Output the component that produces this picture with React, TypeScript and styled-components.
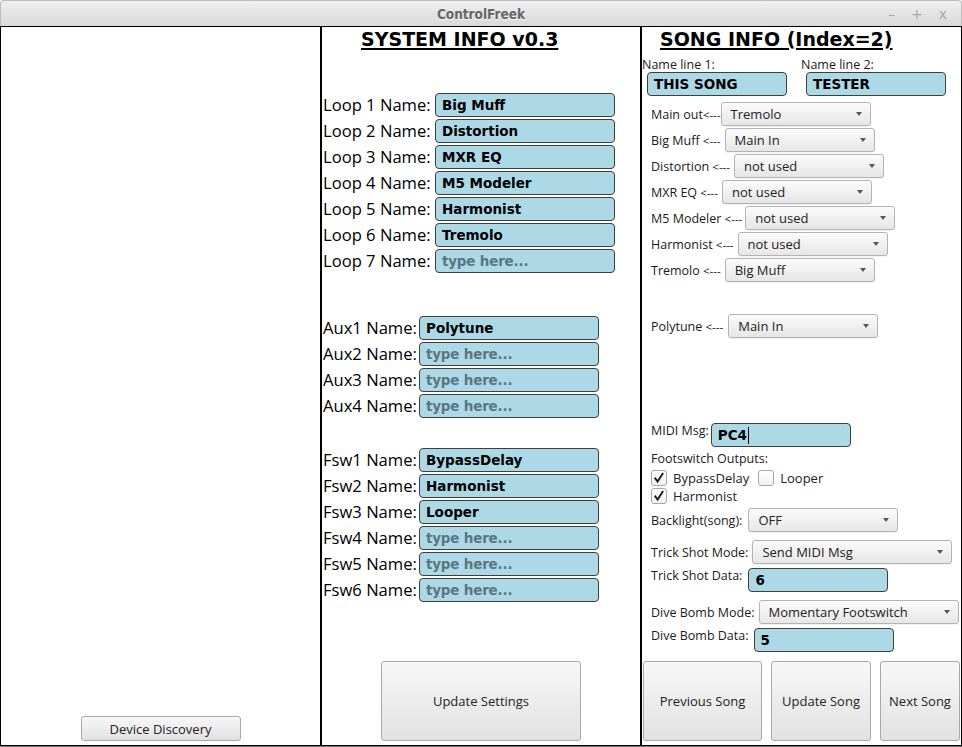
import React from 'react';
import styled, { createGlobalStyle } from 'styled-components';

const GlobalStyle = createGlobalStyle`
  html, body { margin: 0; padding: 0; background: #ffffff; }
  body { font-family: "Open Sans", "Noto Sans", sans-serif; overflow: hidden; }
  * { box-sizing: border-box; }
`;

const Window = styled.div`
  width: 962px;
  height: 747px;
  display: flex;
  flex-direction: column;
  background: #fff;
  border-bottom: 1px solid #777;
`;

const TitleBar = styled.div`
  height: 26px;
  flex: none;
  display: grid;
  grid-template-columns: 1fr auto 1fr;
  align-items: center;
  background: linear-gradient(#efefef, #d9d9d9);
  border: 1px solid #bdbdbd;
  border-bottom: none;
  border-radius: 4px 4px 0 0;
`;

const Title = styled.div`
  grid-column: 2;
  font-family: "DejaVu Sans Condensed", "DejaVu Sans", sans-serif;
  font-stretch: condensed;
  font-weight: bold;
  font-size: 13.5px;
  color: #666;
  text-shadow: 0 1px 0 rgba(255, 255, 255, 0.7);
  padding-top: 1px;
`;

const Controls = styled.div`
  grid-column: 3;
  justify-self: end;
  display: flex;
  gap: 16px;
  padding-right: 14px;
  font-family: "DejaVu Sans", sans-serif;
  font-size: 14px;
  color: #a8a8a8;
`;

const Panels = styled.div`
  flex: 1;
  display: flex;
  min-height: 0;
`;

const Panel = styled.section<{ $w: number }>`
  width: ${(p) => p.$w}px;
  flex: none;
  border: 1px solid #000;
  display: flex;
  flex-direction: column;
  padding-bottom: 4px;
`;

const Header = styled.h1<{ $ml: number }>`
  margin: 1px 0 0 ${(p) => p.$ml}px;
  font-family: "DejaVu Sans", sans-serif;
  font-weight: bold;
  font-size: 19px;
  line-height: 23px;
  color: #000;
  text-decoration: underline;
  text-decoration-thickness: 2px;
  text-underline-offset: 2px;
  white-space: nowrap;
`;

const NameGrid = styled.div<{ $mt: number; $labelW: number }>`
  display: grid;
  grid-template-columns: ${(p) => p.$labelW}px 180px;
  column-gap: 0;
  row-gap: 2px;
  margin-top: ${(p) => p.$mt}px;
  grid-auto-rows: 24px;
  align-items: center;
  padding-left: 1px;
`;

const BigLabel = styled.span`
  font-size: 16.6px;
  color: #000;
  white-space: nowrap;
  line-height: 24px;
`;

const Field = styled.div<{ $w: number; $empty?: boolean }>`
  width: ${(p) => p.$w}px;
  height: 24px;
  flex: none;
  display: flex;
  align-items: center;
  padding-left: 6px;
  background: #add8e6;
  border: 1px solid #3e3e3e;
  border-radius: 4px;
  font-family: "DejaVu Sans", sans-serif;
  font-weight: bold;
  font-size: 13.5px;
  letter-spacing: ${(p) => (p.$empty ? '-0.2px' : '0')};
  color: ${(p) => (p.$empty ? '#5b7681' : '#000')};
  white-space: nowrap;
`;

const Cursor = styled.span`
  display: inline-block;
  width: 1px;
  height: 17px;
  background: #000;
  margin-left: 1px;
`;

const Btn = styled.button<{ $w: number; $h: number }>`
  width: ${(p) => p.$w}px;
  height: ${(p) => p.$h}px;
  flex: none;
  padding: 0;
  border: 1px solid #a9a9a9;
  border-radius: 3px;
  background: linear-gradient(#f7f7f7, #e2e2e2);
  font-family: "Open Sans", "Noto Sans", sans-serif;
  font-size: 13px;
  color: #222;
`;

const BottomCenter = styled.div`
  margin-top: auto;
  display: flex;
  justify-content: center;
`;

const SongNames = styled.div`
  display: grid;
  grid-template-columns: 159px 160px;
  margin-top: 6px;
`;

const NameCol = styled.div`
  display: flex;
  flex-direction: column;
`;

const SmallLabel = styled.span`
  font-size: 12.5px;
  line-height: 15px;
  color: #1a1a1a;
  white-space: nowrap;
`;

const FieldIndent = styled.div`
  padding-left: 5px;
`;

const Row = styled.div<{ $mt: number; $gap: number; $top?: boolean }>`
  display: flex;
  align-items: ${(p) => (p.$top ? 'flex-start' : 'center')};
  gap: ${(p) => p.$gap}px;
  margin-top: ${(p) => p.$mt}px;
  padding-left: 9px;
  min-height: 24px;
`;

const Arrow = styled.span`
  font-size: 11.5px;
`;

const Combo = styled.div<{ $w: number }>`
  width: ${(p) => p.$w}px;
  height: 24px;
  flex: none;
  display: flex;
  align-items: center;
  justify-content: space-between;
  padding: 0 8px 0 9px;
  border: 1px solid #b3b3b3;
  border-radius: 3px;
  background: linear-gradient(#fbfbfb, #e6e6e6);
  box-shadow: 0 1px 0 rgba(0, 0, 0, 0.05);
  font-size: 13px;
  color: #222;
  white-space: nowrap;
`;

const Caret = styled.span`
  width: 0;
  height: 0;
  border-left: 3.5px solid transparent;
  border-right: 3.5px solid transparent;
  border-top: 4px solid #555;
`;

const CheckRow = styled.div<{ $mt: number }>`
  display: flex;
  align-items: center;
  gap: 9px;
  margin-top: ${(p) => p.$mt}px;
  padding-left: 9px;
  height: 16px;
`;

const CheckItem = styled.label`
  display: flex;
  align-items: center;
  gap: 6px;
  font-size: 13px;
  color: #222;
  white-space: nowrap;
`;

const Box = styled.span`
  width: 16px;
  height: 16px;
  flex: none;
  border: 1px solid #a8a8a8;
  border-radius: 3px;
  background: linear-gradient(#ffffff, #f1f1f1);
  display: flex;
  align-items: center;
  justify-content: center;
`;

const SongButtons = styled.div`
  margin-top: auto;
  display: flex;
  gap: 9px;
  padding-left: 1px;
`;

const Check = ({ checked, label }: { checked: boolean; label: string }) => (
  <CheckItem>
    <Box>
      {checked && (
        <svg width="12" height="12" viewBox="0 0 12 12">
          <path d="M2.3 6.4 L4.6 9.6 L9.6 1.8" fill="none" stroke="#1a1a1a" strokeWidth="1.9" strokeLinecap="square" />
        </svg>
      )}
    </Box>
    {label}
  </CheckItem>
);

const ComboBox = ({ w, value }: { w: number; value: string }) => (
  <Combo $w={w}>
    <span>{value}</span>
    <Caret />
  </Combo>
);

const loops = ['Big Muff', 'Distortion', 'MXR EQ', 'M5 Modeler', 'Harmonist', 'Tremolo', ''];
const aux = ['Polytune', '', '', ''];
const fsw = ['BypassDelay', 'Harmonist', 'Looper', '', '', ''];

const routes = [
  { label: 'Main out', sep: '', value: 'Tremolo', gap: 0 },
  { label: 'Big Muff', sep: ' ', value: 'Main In', gap: 4 },
  { label: 'Distortion', sep: ' ', value: 'not used', gap: 4 },
  { label: 'MXR EQ', sep: ' ', value: 'not used', gap: 4 },
  { label: 'M5 Modeler', sep: ' ', value: 'not used', gap: 3 },
  { label: 'Harmonist', sep: ' ', value: 'not used', gap: 4 },
  { label: 'Tremolo', sep: ' ', value: 'Big Muff', gap: 4 },
];

const NameRows = ({ prefix, items, labelW, mt }: { prefix: (i: number) => string; items: string[]; labelW: number; mt: number }) => (
  <NameGrid $mt={mt} $labelW={labelW}>
    {items.map((v, i) => (
      <React.Fragment key={i}>
        <BigLabel>{prefix(i)}</BigLabel>
        <Field $w={180} $empty={!v}>{v || 'type here...'}</Field>
      </React.Fragment>
    ))}
  </NameGrid>
);

export default function App() {
  return (
    <>
      <GlobalStyle />
      <Window>
        <TitleBar>
          <Title>ControlFreek</Title>
          <Controls>
            <span>–</span>
            <span>+</span>
            <span>x</span>
          </Controls>
        </TitleBar>
        <Panels>
          <Panel $w={321}>
            <BottomCenter>
              <Btn $w={160} $h={25}>Device Discovery</Btn>
            </BottomCenter>
          </Panel>

          <Panel $w={320}>
            <Header $ml={39}>SYSTEM INFO v0.3</Header>
            <NameRows prefix={(i) => `Loop ${i + 1} Name:`} items={loops} labelW={112} mt={42} />
            <NameRows prefix={(i) => `Aux${i + 1} Name:`} items={aux} labelW={96} mt={43} />
            <NameRows prefix={(i) => `Fsw${i + 1} Name:`} items={fsw} labelW={96} mt={30} />
            <BottomCenter>
              <Btn $w={200} $h={80}>Update Settings</Btn>
            </BottomCenter>
          </Panel>

          <Panel $w={321}>
            <Header $ml={18}>SONG INFO (Index=2)</Header>
            <SongNames>
              <NameCol>
                <SmallLabel>Name line 1:</SmallLabel>
                <FieldIndent>
                  <Field $w={140}>THIS SONG</Field>
                </FieldIndent>
              </NameCol>
              <NameCol>
                <SmallLabel>Name line 2:</SmallLabel>
                <FieldIndent>
                  <Field $w={140}>TESTER</Field>
                </FieldIndent>
              </NameCol>
            </SongNames>

            {routes.map((r, i) => (
              <Row key={r.label} $mt={i === 0 ? 6 : 2} $gap={r.gap}>
                <SmallLabel>
                  {r.label}
                  {r.sep}
                  <Arrow>&lt;---</Arrow>
                </SmallLabel>
                <ComboBox w={150} value={r.value} />
              </Row>
            ))}
            <Row $mt={32} $gap={5}>
              <SmallLabel>
                Polytune <Arrow>&lt;---</Arrow>
              </SmallLabel>
              <ComboBox w={150} value="Main In" />
            </Row>

            <Row $mt={85} $gap={2} $top>
              <SmallLabel>MIDI Msg:</SmallLabel>
              <Field $w={140}>
                PC4
                <Cursor />
              </Field>
            </Row>
            <Row $mt={4} $gap={0} style={{ minHeight: 15 }}>
              <SmallLabel>Footswitch Outputs:</SmallLabel>
            </Row>
            <CheckRow $mt={4}>
              <Check checked label="BypassDelay" />
              <Check checked={false} label="Looper" />
            </CheckRow>
            <CheckRow $mt={2}>
              <Check checked label="Harmonist" />
            </CheckRow>
            <Row $mt={4} $gap={6}>
              <SmallLabel>Backlight(song):</SmallLabel>
              <ComboBox w={150} value="OFF" />
            </Row>
            <Row $mt={8} $gap={4}>
              <SmallLabel>Trick Shot Mode:</SmallLabel>
              <ComboBox w={200} value="Send MIDI Msg" />
            </Row>
            <Row $mt={4} $gap={6} $top>
              <SmallLabel>Trick Shot Data:</SmallLabel>
              <Field $w={140}>6</Field>
            </Row>
            <Row $mt={8} $gap={4}>
              <SmallLabel>Dive Bomb Mode:</SmallLabel>
              <ComboBox w={200} value="Momentary Footswitch" />
            </Row>
            <Row $mt={4} $gap={5} $top>
              <SmallLabel>Dive Bomb Data:</SmallLabel>
              <Field $w={140}>5</Field>
            </Row>

            <SongButtons>
              <Btn $w={119} $h={80}>Previous Song</Btn>
              <Btn $w={100} $h={80}>Update Song</Btn>
              <Btn $w={80} $h={80}>Next Song</Btn>
            </SongButtons>
          </Panel>
        </Panels>
      </Window>
    </>
  );
}
